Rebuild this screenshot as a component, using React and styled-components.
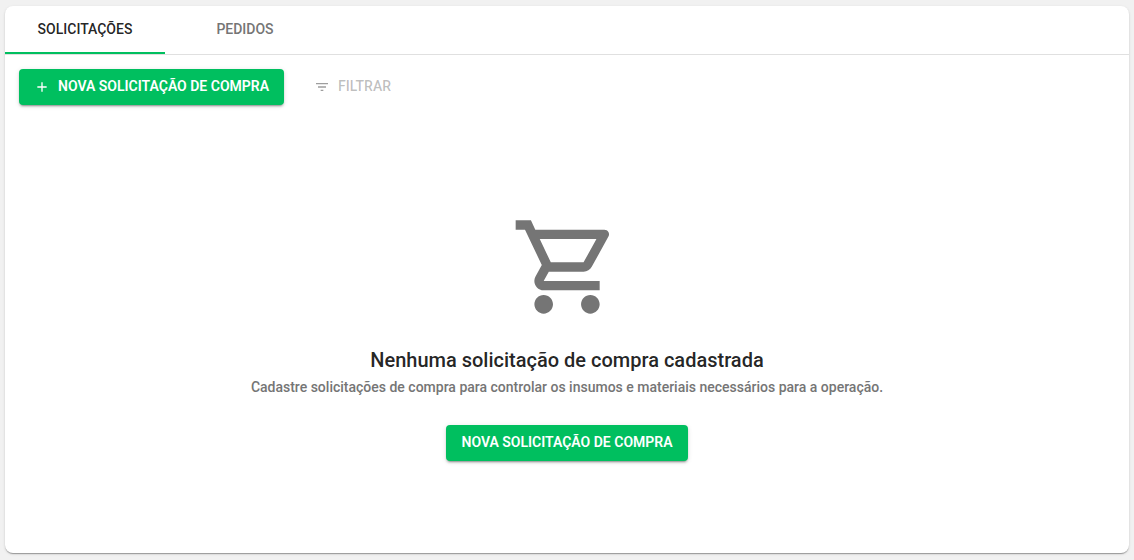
import { useState } from 'react'
import styled, { createGlobalStyle, ThemeProvider } from 'styled-components'

const theme = {
  primary: '#00bf5f',
  background: '#f1f1f1',
  surface: '#fff',
  text: 'rgba(0, 0, 0, 0.87)',
  muted: '#757575',
  disabled: 'rgba(0, 0, 0, 0.26)',
  disabledIcon: 'rgba(0, 0, 0, 0.38)',
  divider: 'rgba(0, 0, 0, 0.12)',
}

const GlobalStyle = createGlobalStyle`
  * {
    box-sizing: border-box;
  }

  body {
    margin: 0;
    font-family: Roboto, 'Liberation Sans', sans-serif;
    font-size: 14px;
    background: ${({ theme }) => theme.background};
    color: ${({ theme }) => theme.text};
  }
`

const Page = styled.div`
  display: flex;
  min-height: 100vh;
  padding: 6px 5px 7px;
`

const Card = styled.main`
  display: flex;
  flex: 1;
  flex-direction: column;
  background: ${({ theme }) => theme.surface};
  border-radius: 8px;
  overflow: hidden;
  box-shadow: 0 2px 1px -1px rgba(0, 0, 0, 0.2), 0 1px 1px 0 rgba(0, 0, 0, 0.14),
    0 1px 3px 0 rgba(0, 0, 0, 0.12);
`

const TabList = styled.div`
  display: flex;
  border-bottom: 1px solid ${({ theme }) => theme.divider};
`

const Tab = styled.button`
  width: 160px;
  height: 48px;
  padding: 0 0 2px;
  border: 0;
  background: none;
  box-shadow: ${({ $active, theme }) => ($active ? `inset 0 -2px ${theme.primary}` : 'none')};
  color: ${({ $active, theme }) => ($active ? theme.text : theme.muted)};
  font: inherit;
  font-weight: 500;
  line-height: 20px;
  cursor: pointer;
`

const Toolbar = styled.div`
  display: flex;
  gap: 15px;
  padding: 14px;
`

const Svg = styled.svg`
  flex: none;
  fill: currentColor;
`

const CartSvg = styled(Svg)`
  color: ${({ theme }) => theme.muted};
`

const Button = styled.button`
  display: inline-flex;
  align-items: center;
  gap: 8px;
  height: 36px;
  padding: 0 15px;
  border: 0;
  border-radius: 4px;
  background: none;
  font: inherit;
  font-weight: 500;
  line-height: 20px;
  color: ${({ theme }) => theme.text};
  cursor: pointer;

  &:disabled {
    color: ${({ theme }) => theme.disabled};
    cursor: default;
  }

  &:disabled ${Svg} {
    color: ${({ theme }) => theme.disabledIcon};
  }
`

const Label = styled.span`
  padding-bottom: 2px;
`

const PrimaryButton = styled(Button)`
  background: ${({ theme }) => theme.primary};
  color: #fff;
  font-weight: 600;
  box-shadow: 0 3px 1px -2px rgba(0, 0, 0, 0.2), 0 2px 2px 0 rgba(0, 0, 0, 0.14),
    0 1px 5px 0 rgba(0, 0, 0, 0.12);
`

const EmptyState = styled.section`
  display: flex;
  flex: 1;
  flex-direction: column;
  align-items: center;
  justify-content: center;
  padding: 0 16px;
  text-align: center;
`

const Title = styled.h2`
  margin: 24px 0 0;
  font-size: 20px;
  font-weight: 500;
  line-height: 26px;
`

const Description = styled.p`
  margin: 4px 0 28px;
  color: ${({ theme }) => theme.muted};
  font-weight: 500;
  line-height: 20px;
`

const Icon = ({ as: Component = Svg, size = 16, path }) => (
  <Component width={size} height={size} viewBox="0 0 24 24" aria-hidden="true">
    <path d={path} />
  </Component>
)

const icons = {
  add: 'M19 13h-6v6h-2v-6H5v-2h6V5h2v6h6v2z',
  filter: 'M10 18h4v-2h-4v2zM3 6v2h18V6H3zm3 7h12v-2H6v2z',
  cart:
    'M15.55 13c.75 0 1.41-.41 1.75-1.03l3.58-6.49A.996.996 0 0 0 20.01 4H5.21l-.94-2H1v2h2l3.6 7.59-1.35 2.44C4.52 15.37 5.48 17 7 17h12v-2H7l1.1-2h7.45zM6.16 6h12.15l-2.76 5H8.53L6.16 6zM7 18c-1.1 0-1.99.9-1.99 2S5.9 22 7 22s2-.9 2-2-.9-2-2-2zm10 0c-1.1 0-1.99.9-1.99 2s.89 2 1.99 2 2-.9 2-2-.9-2-2-2z',
}

const tabs = ['SOLICITAÇÕES', 'PEDIDOS']

const App = () => {
  const [active, setActive] = useState(tabs[0])

  return (
    <ThemeProvider theme={theme}>
      <GlobalStyle />
      <Page>
        <Card>
          <TabList role="tablist">
            {tabs.map(tab => (
              <Tab
                key={tab}
                type="button"
                role="tab"
                aria-selected={tab === active}
                $active={tab === active}
                onClick={() => setActive(tab)}
              >
                {tab}
              </Tab>
            ))}
          </TabList>
          <Toolbar>
            <PrimaryButton type="button">
              <Icon path={icons.add} />
              <Label>NOVA SOLICITAÇÃO DE COMPRA</Label>
            </PrimaryButton>
            <Button type="button" disabled>
              <Icon path={icons.filter} />
              <Label>FILTRAR</Label>
            </Button>
          </Toolbar>
          <EmptyState>
            <Icon as={CartSvg} size={112} path={icons.cart} />
            <Title>Nenhuma solicitação de compra cadastrada</Title>
            <Description>
              Cadastre solicitações de compra para controlar os insumos e materiais necessários para a
              operação.
            </Description>
            <PrimaryButton type="button">
              <Label>NOVA SOLICITAÇÃO DE COMPRA</Label>
            </PrimaryButton>
          </EmptyState>
        </Card>
      </Page>
    </ThemeProvider>
  )
}

export default App
